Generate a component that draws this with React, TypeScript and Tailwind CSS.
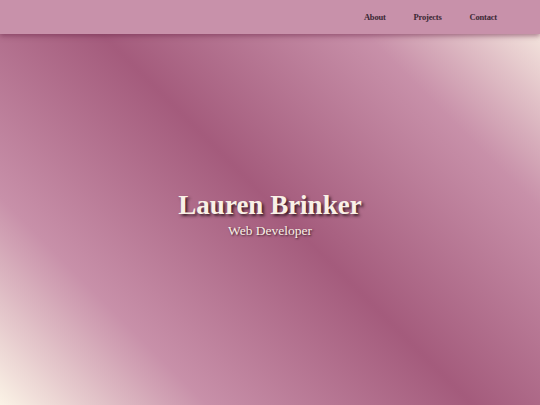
export default function App() {
  const links = ['About', 'Projects', 'Contact'];

  return (
    <div className="relative h-[405px] w-full overflow-hidden bg-[linear-gradient(45deg,#fbf3e6_0%,#c890a9_22%,#a45b7c_50%,#c890a9_78%,#fbf3e6_100%)] font-['Liberation_Serif',serif]">
      {/* header */}
      <header className="relative z-10 flex h-[34px] items-center justify-end bg-[#c891aa] pr-[43px] shadow-[0_2px_5px_rgba(110,40,75,0.55)]">
        <nav className="flex items-center gap-[28px]">
          {links.map((l) => (
            <a key={l} href="#" className="text-[8.5px] font-bold tracking-[-0.2px] text-[#3b2834]">
              {l}
            </a>
          ))}
        </nav>
      </header>

      {/* hero */}
      <main className="flex h-[371px] flex-col items-center justify-center pb-[10px]">
        <h1 className="text-[27px] font-bold leading-tight text-[#f9f0e6] [text-shadow:2px_2px_3px_rgba(40,15,25,0.85)]">
          Lauren Brinker
        </h1>
        <p className="mt-[1px] text-[13.5px] leading-tight text-[#f9f0e6] [text-shadow:1px_1px_2px_rgba(40,15,25,0.8)]">
          Web Developer
        </p>
      </main>
    </div>
  );
}
